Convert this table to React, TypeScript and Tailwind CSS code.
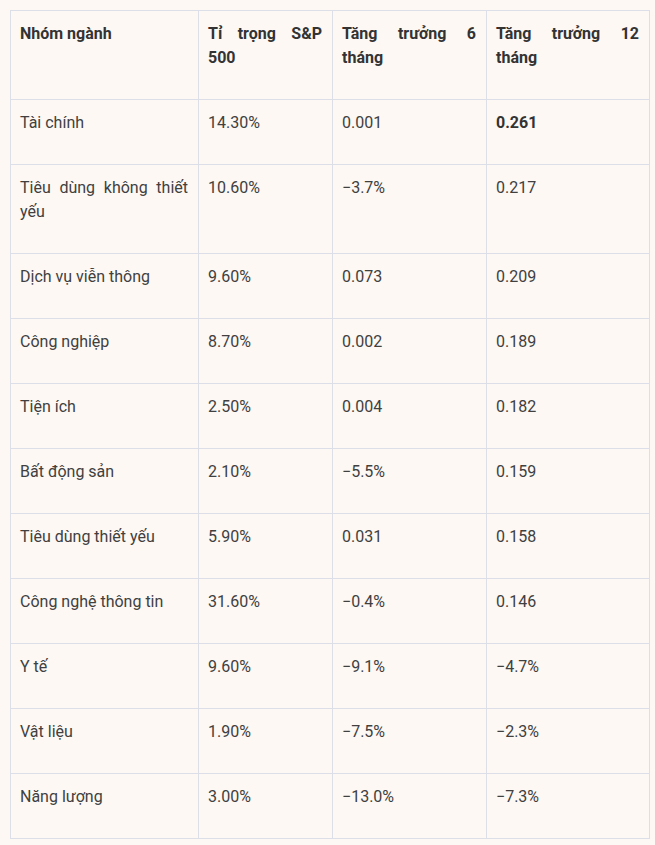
const rows: [string, string, string, string, boolean?][] = [
  ['Tài chính', '14.30%', '0.001', '0.261', true],
  ['Tiêu dùng không thiết yếu', '10.60%', '−3.7%', '0.217'],
  ['Dịch vụ viễn thông', '9.60%', '0.073', '0.209'],
  ['Công nghiệp', '8.70%', '0.002', '0.189'],
  ['Tiện ích', '2.50%', '0.004', '0.182'],
  ['Bất động sản', '2.10%', '−5.5%', '0.159'],
  ['Tiêu dùng thiết yếu', '5.90%', '0.031', '0.158'],
  ['Công nghệ thông tin', '31.60%', '−0.4%', '0.146'],
  ['Y tế', '9.60%', '−9.1%', '−4.7%'],
  ['Vật liệu', '1.90%', '−7.5%', '−2.3%'],
  ['Năng lượng', '3.00%', '−13.0%', '−7.3%'],
];

const cell = 'border border-[#dcdfe8] align-top pl-[9px] pr-[10px] pt-[11px] pb-[29px] text-justify';

export default function App() {
  return (
    <div className="min-h-[845px] bg-[#fdf8f4] p-[10px] font-['Roboto',sans-serif] text-[16px] leading-[24px] text-[#404040]">
      <table className="w-[639px] table-fixed border-collapse">
        <colgroup>
          <col className="w-[188px]" />
          <col className="w-[134px]" />
          <col className="w-[154px]" />
          <col className="w-[163px]" />
        </colgroup>
        <thead>
          <tr className="font-bold text-[#333]">
            <td className={cell}>Nhóm ngành</td>
            <td className={cell}>Tỉ trọng S&amp;P 500</td>
            <td className={cell}>Tăng trưởng 6 tháng</td>
            <td className={cell}>Tăng trưởng 12 tháng</td>
          </tr>
        </thead>
        <tbody>
          {rows.map(([name, w, g6, g12, bold]) => (
            <tr key={name}>
              <td className={cell}>{name}</td>
              <td className={cell}>{w}</td>
              <td className={cell}>{g6}</td>
              <td className={bold ? `${cell} font-bold text-[#333]` : cell}>{g12}</td>
            </tr>
          ))}
        </tbody>
      </table>
    </div>
  );
}
